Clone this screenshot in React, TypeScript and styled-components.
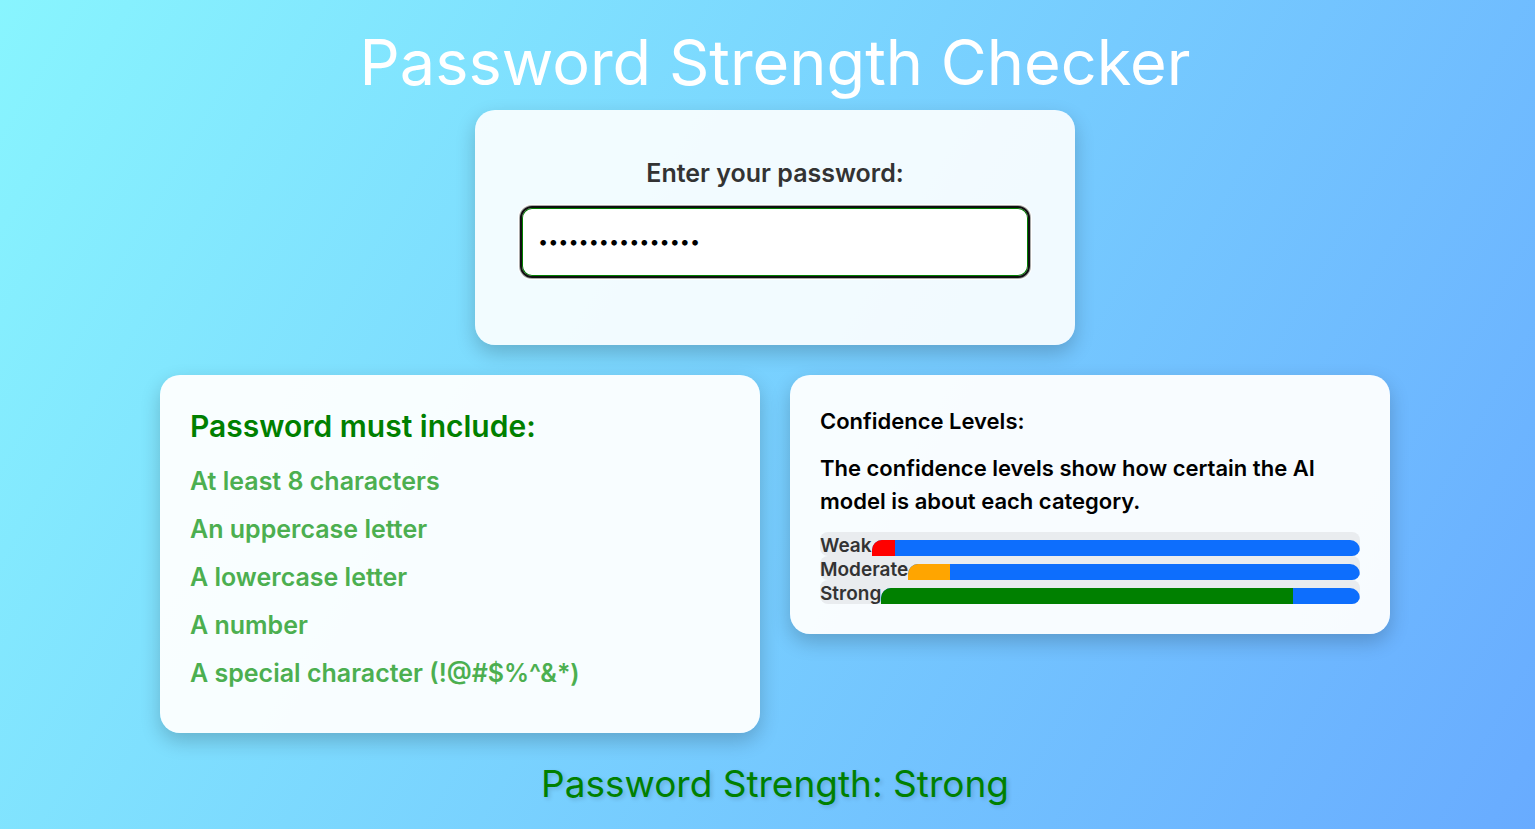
import React, { useState } from "react";
import styled, { createGlobalStyle } from "styled-components";

const GlobalStyle = createGlobalStyle`
  *, *::before, *::after { box-sizing: border-box; }
  body {
    margin: 0;
    font-family: Inter, "Open Sans", sans-serif;
    font-weight: 600;
    color: #000;
  }
`;

const Page = styled.main`
  min-height: 100vh;
  padding: 14px 0 0 15px;
  display: flex;
  flex-direction: column;
  align-items: center;
  background: linear-gradient(120deg, #89f7fe -3%, #66a6ff 107%);
`;

const Title = styled.h1`
  margin: 0;
  font-size: 63px;
  line-height: 96px;
  font-weight: 400;
  color: #fff;
  text-align: center;
`;

const Card = styled.section<{ $alpha?: number }>`
  width: 100%;
  max-width: 600px;
  padding: 30px;
  border-radius: 20px;
  background: rgba(255, 255, 255, ${(p) => p.$alpha ?? 0.95});
  box-shadow: 0 8px 20px rgba(0, 0, 0, 0.2);
`;

const EntryCard = styled(Card)`
  padding: 45px 45px 67px;
  display: flex;
  flex-direction: column;
  gap: 15px;
`;

const Label = styled.label`
  font-size: 25px;
  line-height: 36px;
  color: #333;
  text-align: center;
`;

const PasswordInput = styled.input`
  width: 100%;
  height: 72px;
  padding: 0 16px 2px;
  border: 2px solid #101010;
  border-radius: 12px;
  outline: none;
  background: #fff;
  box-shadow: inset 0 0 0 1px green, 0 0 0 1px #aaa, 0 0 0 2px #fff;
  font-family: Inter, sans-serif;
  font-size: 18px;
  color: #000;
`;

const Columns = styled.div`
  width: 100%;
  max-width: 1230px;
  margin-top: 30px;
  display: flex;
  align-items: flex-start;
  gap: 30px;
`;

const RulesTitle = styled.h2`
  margin: 0 0 16px;
  font-size: 30px;
  line-height: 42px;
  font-weight: 600;
  color: green;
`;

const Rules = styled.ul`
  margin: 0;
  padding: 0;
  list-style: none;
`;

const Rule = styled.li`
  font-size: 25px;
  line-height: 36px;
  margin-bottom: 12px;
  color: #4caf50;
`;

const ConfidenceText = styled.p`
  margin: 0 0 14px;
  font-size: 22px;
  line-height: 33px;
`;

const Row = styled.div`
  height: 24px;
  display: flex;
  align-items: flex-end;
  overflow: hidden;
  border-radius: 8px;
  background: #e9ecef;
`;

const RowLabel = styled.span`
  padding-top: 4px;
  font-size: 19px;
  line-height: 20px;
  color: #333;
`;

const Track = styled.div`
  flex: 1;
  height: 16px;
  overflow: hidden;
  border-radius: 10px 10px 0 0;
  background: #0d6efd;
`;

const Fill = styled.div<{ $color: string }>`
  height: 100%;
  background: ${(p) => p.$color};
`;

const Result = styled.p`
  margin: 24px 0 0;
  font-size: 37px;
  line-height: 54px;
  font-weight: 400;
  color: green;
  text-align: center;
  text-shadow: 2px 2px 4px rgba(0, 0, 0, 0.15);
`;

const rules = [
  "At least 8 characters",
  "An uppercase letter",
  "A lowercase letter",
  "A number",
  "A special character (!@#$%^&*)",
];

const levels = [
  { name: "Weak", color: "red", value: 4.7 },
  { name: "Moderate", color: "orange", value: 9.3 },
  { name: "Strong", color: "green", value: 86 },
];

export default function App() {
  const [password, setPassword] = useState("Str0ng!Passw0rd#");
  return (
    <>
      <GlobalStyle />
      <Page>
        <Title>Password Strength Checker</Title>
        <EntryCard $alpha={0.9}>
          <Label htmlFor="password">Enter your password:</Label>
          <PasswordInput
            id="password"
            type="password"
            value={password}
            onChange={(e) => setPassword(e.target.value)}
          />
        </EntryCard>
        <Columns>
          <Card>
            <RulesTitle>Password must include:</RulesTitle>
            <Rules>
              {rules.map((r) => (
                <Rule key={r}>{r}</Rule>
              ))}
            </Rules>
          </Card>
          <Card>
            <ConfidenceText>Confidence Levels:</ConfidenceText>
            <ConfidenceText>
              The confidence levels show how certain the AI model is about each category.
            </ConfidenceText>
            {levels.map((l) => (
              <Row key={l.name}>
                <RowLabel>{l.name}</RowLabel>
                <Track role="progressbar" aria-label={l.name} aria-valuenow={l.value} aria-valuemin={0} aria-valuemax={100}>
                  <Fill $color={l.color} style={{ width: `${l.value}%` }} />
                </Track>
              </Row>
            ))}
          </Card>
        </Columns>
        <Result>Password Strength: Strong</Result>
      </Page>
    </>
  );
}
